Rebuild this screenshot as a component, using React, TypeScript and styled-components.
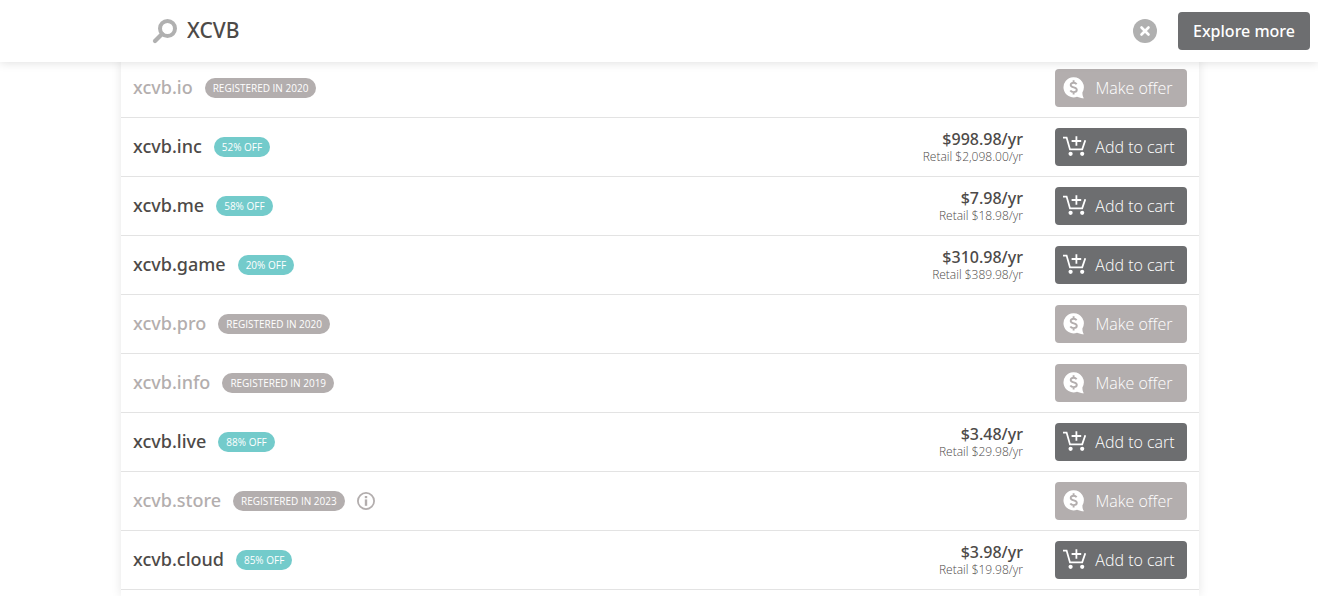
import React, { useState } from 'react';
import styled, { createGlobalStyle } from 'styled-components';

const GlobalStyle = createGlobalStyle`
  *, *::before, *::after { box-sizing: border-box; }
  body {
    margin: 0;
    background: #fff;
    color: #4d4a48;
    font-family: "Open Sans", "Noto Sans", sans-serif;
    font-size: 16px;
  }
  button, input { font: inherit; }
`;

const mediumFont = '"Noto Sans", "Open Sans", sans-serif';

const Page = styled.div`
  display: flex;
  flex-direction: column;
  height: 100vh;
  overflow: hidden;
`;

const Header = styled.header`
  position: relative;
  z-index: 2;
  flex: none;
  display: flex;
  align-items: center;
  height: 62px;
  padding: 0 8px 0 152px;
  background: #fff;
  box-shadow: 0 0 10px rgba(0, 0, 0, 0.15);
`;

const SearchForm = styled.form`
  flex: 1;
  display: flex;
  align-items: center;
  gap: 9px;
  min-width: 0;
`;

const SearchInput = styled.input`
  flex: 1;
  min-width: 0;
  height: 38px;
  padding: 0 0 2px;
  border: 0;
  outline: 0;
  background: transparent;
  color: #4d4a48;
  font-family: ${mediumFont};
  font-size: 21px;
  font-weight: 500;
`;

const ClearButton = styled.button`
  display: flex;
  padding: 0;
  border: 0;
  background: none;
  cursor: pointer;
`;

const Button = styled.button<{ $muted?: boolean; $strong?: boolean }>`
  flex: none;
  display: flex;
  align-items: center;
  justify-content: ${p => (p.$strong ? 'center' : 'flex-start')};
  gap: 4px;
  width: 132px;
  height: 38px;
  padding: 0 8px;
  border: 0;
  border-radius: 4px;
  background: ${p => (p.$muted ? '#b3aeae' : '#6d6e70')};
  color: #fff;
  font-family: ${p => (p.$strong ? mediumFont : 'inherit')};
  font-weight: ${p => (p.$strong ? 500 : 300)};
  white-space: nowrap;
  cursor: pointer;
`;

const ButtonLabel = styled.span`
  flex: 1;
  padding-bottom: 1px;
  text-align: center;
`;

const ExploreButton = styled(Button)`
  margin-left: 21px;
`;

const Results = styled.main`
  flex: 1 0 auto;
  display: flex;
  padding-left: 2px;
  margin-top: -3px;
`;

const List = styled.ul`
  width: 100%;
  max-width: 1078px;
  margin: 0 auto;
  padding: 0;
  list-style: none;
  box-shadow: 0 0 10px rgba(0, 0, 0, 0.1);
`;

const Row = styled.li`
  display: flex;
  align-items: center;
  height: 59px;
  padding: 0 12px;
  border-bottom: 1px solid #e3e3e3;
`;

const Domain = styled.span<{ $taken?: boolean }>`
  margin-right: 12px;
  padding-bottom: 2px;
  color: ${p => (p.$taken ? '#b3aeae' : '#4d4a48')};
  font-family: ${mediumFont};
  font-size: 18px;
  line-height: 24px;
  font-weight: 500;
`;

const Badge = styled.span<{ $taken?: boolean }>`
  height: 20px;
  padding: 0 8px;
  border-radius: 10px;
  background: ${p => (p.$taken ? '#b3aeae' : '#73cbcb')};
  color: #fff;
  font-size: 10px;
  line-height: 20px;
  white-space: nowrap;
`;

const InfoButton = styled(ClearButton)`
  margin-left: 12px;
`;

const Price = styled.div`
  display: flex;
  flex-direction: column;
  align-items: flex-end;
  padding-bottom: 1px;
`;

const Amount = styled.strong`
  font-family: ${mediumFont};
  font-size: 16px;
  line-height: 20px;
  font-weight: 500;
`;

const Retail = styled.span`
  color: #4d4a48;
  font-size: 12px;
  line-height: 16px;
  font-weight: 300;
`;

const Side = styled.div`
  display: flex;
  align-items: center;
  gap: 32px;
  margin-left: auto;
`;

const SearchIcon = () => (
  <svg width="26" height="26" viewBox="0 0 26 26" fill="none" stroke="#b0b0b0" aria-hidden="true">
    <circle cx="15.5" cy="10.5" r="7.5" strokeWidth="4" />
    <path d="M10 16 3 23" strokeWidth="4.2" strokeLinecap="round" />
  </svg>
);

const ClearIcon = () => (
  <svg width="24" height="24" viewBox="0 0 24 24" aria-hidden="true">
    <circle cx="12" cy="12" r="12" fill="#b0b0b0" />
    <path d="m8.5 8.5 7 7m0-7-7 7" stroke="#fff" strokeWidth="2.6" strokeLinecap="round" />
  </svg>
);

const CartIcon = () => (
  <svg width="24" height="22" viewBox="0 0 24 22" fill="none" stroke="#fff" strokeWidth="1.8" aria-hidden="true">
    <path d="M0 1.6h3.6L7 13.4h12.2L22.3 4.2" />
    <path d="M13.4.2v9.6M8.6 5h9.6" />
    <circle cx="7.6" cy="17.8" r="2.1" fill="#fff" stroke="none" />
    <circle cx="19.2" cy="17.8" r="2.1" fill="#fff" stroke="none" />
  </svg>
);

const OfferIcon = () => (
  <svg width="22" height="22" viewBox="0 0 22 22" aria-hidden="true">
    <path d="M10.2.2A10.1 10.1 0 1 0 14 19.8c2.2.9 4.4 1.5 7 1.5-1.2-1.4-1.6-3.4-1.6-5.9A10.1 10.1 0 0 0 10.2.2Z" fill="#fff" />
    <path d="M13.6 7.3c-.6-1-1.7-1.5-3-1.5-1.7 0-2.9.8-2.9 2.2 0 3.1 6.1 1.7 6.1 4.8 0 1.4-1.2 2.3-3.1 2.3-1.5 0-2.7-.5-3.4-1.6M10.6 3.2v2.6M10.6 15.1v2.5" fill="none" stroke="#b3aeae" strokeWidth="1.9" />
  </svg>
);

const InfoIcon = () => (
  <svg width="18" height="18" viewBox="0 0 18 18" aria-hidden="true">
    <circle cx="9" cy="9" r="8.1" fill="none" stroke="#b3aeae" strokeWidth="1.8" />
    <path d="M9 7.4v6.4" fill="none" stroke="#b3aeae" strokeWidth="2.4" />
    <path d="M9 4v2.2" fill="none" stroke="#b3aeae" strokeWidth="2.4" />
  </svg>
);

type Result = {
  domain: string;
  note: string;
  price?: string;
  retail?: string;
  info?: boolean;
};

const results: Result[] = [
  { domain: 'xcvb.io', note: 'REGISTERED IN 2020' },
  { domain: 'xcvb.inc', note: '52% OFF', price: '$998.98/yr', retail: '$2,098.00/yr' },
  { domain: 'xcvb.me', note: '58% OFF', price: '$7.98/yr', retail: '$18.98/yr' },
  { domain: 'xcvb.game', note: '20% OFF', price: '$310.98/yr', retail: '$389.98/yr' },
  { domain: 'xcvb.pro', note: 'REGISTERED IN 2020' },
  { domain: 'xcvb.info', note: 'REGISTERED IN 2019' },
  { domain: 'xcvb.live', note: '88% OFF', price: '$3.48/yr', retail: '$29.98/yr' },
  { domain: 'xcvb.store', note: 'REGISTERED IN 2023', info: true },
  { domain: 'xcvb.cloud', note: '85% OFF', price: '$3.98/yr', retail: '$19.98/yr' },
];

const ResultRow = ({ domain, note, price, retail, info }: Result) => {
  const taken = !price;
  return (
    <Row>
      <Domain $taken={taken}>{domain}</Domain>
      <Badge $taken={taken}>{note}</Badge>
      {info && (
        <InfoButton type="button" aria-label="More information">
          <InfoIcon />
        </InfoButton>
      )}
      <Side>
        {price && (
          <Price>
            <Amount>{price}</Amount>
            <Retail>Retail {retail}</Retail>
          </Price>
        )}
        <Button type="button" $muted={taken}>
          {taken ? <OfferIcon /> : <CartIcon />}
          <ButtonLabel>{taken ? 'Make offer' : 'Add to cart'}</ButtonLabel>
        </Button>
      </Side>
    </Row>
  );
};

export default function App() {
  const [query, setQuery] = useState('XCVB');
  return (
    <Page>
      <GlobalStyle />
      <Header>
        <SearchForm role="search" onSubmit={e => e.preventDefault()}>
          <SearchIcon />
          <SearchInput aria-label="Search domains" value={query} onChange={e => setQuery(e.target.value)} />
          <ClearButton type="button" aria-label="Clear search" onClick={() => setQuery('')}>
            <ClearIcon />
          </ClearButton>
        </SearchForm>
        <ExploreButton type="button" $strong>Explore more</ExploreButton>
      </Header>
      <Results>
        <List>
          {results.map(r => (
            <ResultRow key={r.domain} {...r} />
          ))}
        </List>
      </Results>
    </Page>
  );
}
